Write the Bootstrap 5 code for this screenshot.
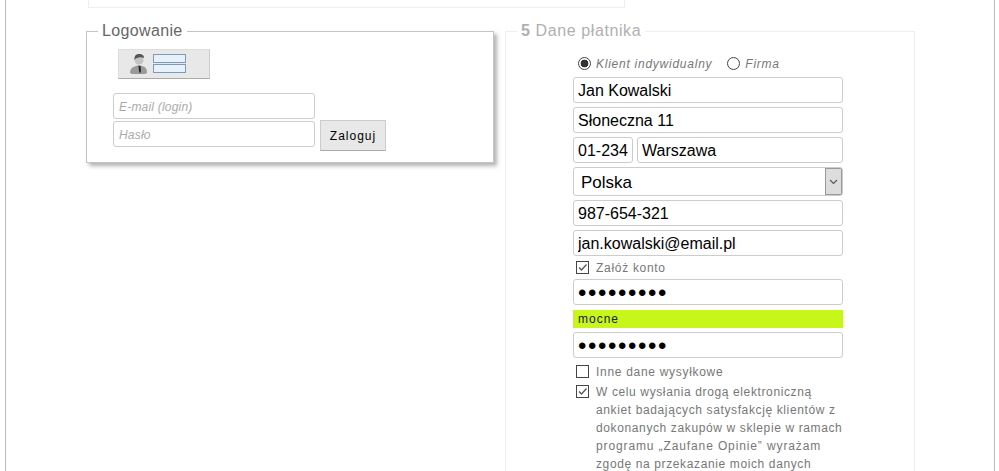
<!DOCTYPE html>
<html lang="pl">
<head>
<meta charset="utf-8">
<title>Logowanie</title>
<link href="https://cdn.jsdelivr.net/npm/bootstrap@5.3.0/dist/css/bootstrap.min.css" rel="stylesheet">
<style>
html,body{height:471px;overflow:hidden;background:#fff}
body{font-family:"Liberation Sans",Arial,sans-serif;font-size:12px;color:#777;letter-spacing:.7px}
.frame{margin:0 4px 0 5px;height:640px;border-left:1px solid #bbb;border-right:1px solid #bbb;padding-left:80px}
.topbox{width:537px;height:8px;margin-left:2px;border:1px solid #eee;border-top:0}
.cols{margin-top:23px;gap:11px}
.fset{position:relative;border:1px solid #c4c4c4;width:408px;margin:0;padding:0;min-width:0}
.fset legend{float:none;width:auto;margin:0 0 0 11px;padding:0 4px;font-size:16px;line-height:18px;color:#666;letter-spacing:.35px}
.login{height:132px;box-shadow:3px 3px 4px rgba(0,0,0,.3);padding:0 0 0 26px}
.login legend{margin-top:-10px;position:absolute;top:0;left:0;background:#fff}
.pay{border-color:#eee;width:410px;height:600px;padding:0 0 0 67px}
.pay legend{margin-top:-10px;position:absolute;top:0;left:0;background:#fff;color:#b0b0b0;letter-spacing:.6px}
.iconbtn{width:92px;height:30px;margin:17px 0 14px 5px;background:#e8e8e8;border:1px solid #ddd;border-bottom-color:#aaa;border-right-color:#ccc;padding:0 0 0 11px}
.boxes{margin-left:-5px}
.fld{display:block;width:202px;height:26px;border:1px solid #ccc;border-radius:3px;padding:1px 5px 0;font:italic 12px "Liberation Sans",Arial,sans-serif;letter-spacing:.2px;color:#000;outline:0}
.fld::placeholder{color:#aaa;opacity:1}
.zal{width:66px;height:31px;background:#e8e8e8;border:1px solid #ccc;border-bottom-color:#aaa;border-radius:0;padding:0;font-size:12px;letter-spacing:1px;color:#000;margin:0 0 -4px 5px}
.loginrows{gap:2px}
.stack{width:270px;gap:4px;padding-top:27px}
.ent{display:block;width:100%;height:26px;border:1px solid #ccc;border-radius:3px;padding:1px 4px 0;font:16px "Liberation Sans",Arial,sans-serif;letter-spacing:0;color:#000;background:#fff;outline:0}
.ent.pw{font-size:24px;letter-spacing:1.600px}
.zip{width:60px;flex:none}
.sel{height:29px;padding-left:7px;font-size:17px;appearance:none;background:#fff url("data:image/svg+xml,%3Csvg xmlns='http://www.w3.org/2000/svg' width='17' height='27'%3E%3Crect x='.5' y='.5' width='16' height='26' fill='%23ddd' stroke='%23999'/%3E%3Cpath d='M5 12l3.500 3.500L12 12' fill='none' stroke='%23555' stroke-width='1.100'/%3E%3C/svg%3E") no-repeat right 0 center}
.radios{height:19px;margin:-5px 0 0 5px;font-style:italic;gap:5px;line-height:18px;letter-spacing:.75px}
.kind{margin-right:10px}
.rd,.ck{appearance:none;flex:none;margin:0;background:#fff}
.rd{width:13px;height:13px;border:1px solid #444;border-radius:50%}
.rd:checked{background:radial-gradient(circle,#333 0 3.600px,#fff 4.200px)}
.ck{width:13px;height:13px;border:1px solid #444;border-radius:0}
.ck:checked{background:#fff url("data:image/svg+xml,%3Csvg xmlns='http://www.w3.org/2000/svg' width='11' height='11'%3E%3Cpath d='M2 5.500l2.500 2.500L9.500 2.500' fill='none' stroke='%23555' stroke-width='1.300'/%3E%3C/svg%3E") no-repeat center}
.ckrow{margin-left:3px;gap:7px;line-height:18px}
.ckrow .ck{margin-top:2px}
.strength{height:18px;background:#c6f61a;color:#222;line-height:18px;padding-left:5px;margin:1px 0 0;letter-spacing:1px}
.ckrow.first{margin-top:-1px;height:16px}
.ckrow.inne{margin-top:1px;height:18px}
.ckrow.agree{margin-top:-2px}
.agreetext{margin:0;width:254px;white-space:nowrap}
.agreetext span{display:block;letter-spacing:.62px}
.agreetext span.wide{letter-spacing:.88px}
</style>
</head>
<body>
<div class="frame">
  <div class="topbox"></div>
  <div class="cols d-flex align-items-start">
    <fieldset class="fset login">
      <legend>Logowanie</legend>
      <div class="iconbtn d-flex align-items-center">
        <svg width="28" height="20" viewBox="0 0 28 20" aria-hidden="true">
          <path d="M0 19c0-4 2-6 6-7l3-1 3 1c4 1 5 3 5 7l-2 1H2z" fill="#9a9a9a"/>
          <circle cx="9" cy="6" r="4.500" fill="#c4c4c4"/>
          <path d="M4.500 6C4 2 6 0 9 0c3 0 5 1 5 4-2-1-5-1-7 0-1 0-2 1-2.500 2z" fill="#555"/>
          <path d="M8.500 12l2 0 .5 5-1 2.500-1-2.500z" fill="#222"/>
        </svg>
        <svg class="boxes" width="34" height="20" viewBox="0 0 34 20" aria-hidden="true">
          <rect x=".5" y=".5" width="32" height="8" fill="#e8f0fa" stroke="#8499ab"/>
          <rect x=".5" y="10.500" width="32" height="8" fill="#e8f0fa" stroke="#8499ab"/>
        </svg>
      </div>
      <div class="d-flex align-items-end">
        <div class="loginrows d-flex flex-column">
          <input class="fld" type="text" placeholder="E-mail (login)">
          <input class="fld" type="password" placeholder="Hasło">
        </div>
        <button class="zal" type="button">Zaloguj</button>
      </div>
    </fieldset>
    <fieldset class="fset pay">
      <legend><b>5</b> Dane płatnika</legend>
      <div class="stack d-flex flex-column">
        <div class="radios d-flex align-items-center">
          <input class="rd" type="radio" name="t" checked><span class="kind">Klient indywidualny</span>
          <input class="rd" type="radio" name="t"><span>Firma</span>
        </div>
        <input class="ent" type="text" value="Jan Kowalski">
        <input class="ent" type="text" value="Słoneczna 11">
        <div class="d-flex gap-1">
          <input class="ent zip" type="text" value="01-234">
          <input class="ent" type="text" value="Warszawa">
        </div>
        <select class="ent sel"><option>Polska</option></select>
        <input class="ent" type="text" value="987-654-321">
        <input class="ent" type="text" value="jan.kowalski@email.pl">
        <label class="ckrow first d-flex"><input class="ck" type="checkbox" checked><span>Załóż konto</span></label>
        <input class="ent pw" type="password" value="123456789">
        <div class="strength">mocne</div>
        <input class="ent pw" type="password" value="123456789">
        <label class="ckrow inne d-flex"><input class="ck" type="checkbox"><span>Inne dane wysyłkowe</span></label>
        <label class="ckrow agree d-flex"><input class="ck" type="checkbox" checked><p class="agreetext"><span>W celu wysłania drogą elektroniczną</span><span>ankiet badających satysfakcję klientów z</span><span>dokonanych zakupów w sklepie w ramach</span><span class="wide">programu „Zaufane Opinie” wyrażam</span><span>zgodę na przekazanie moich danych</span></p></label>
      </div>
    </fieldset>
  </div>
</div>
<script src="https://cdn.jsdelivr.net/npm/bootstrap@5.3.0/dist/js/bootstrap.bundle.min.js"></script>
</body>
</html>
